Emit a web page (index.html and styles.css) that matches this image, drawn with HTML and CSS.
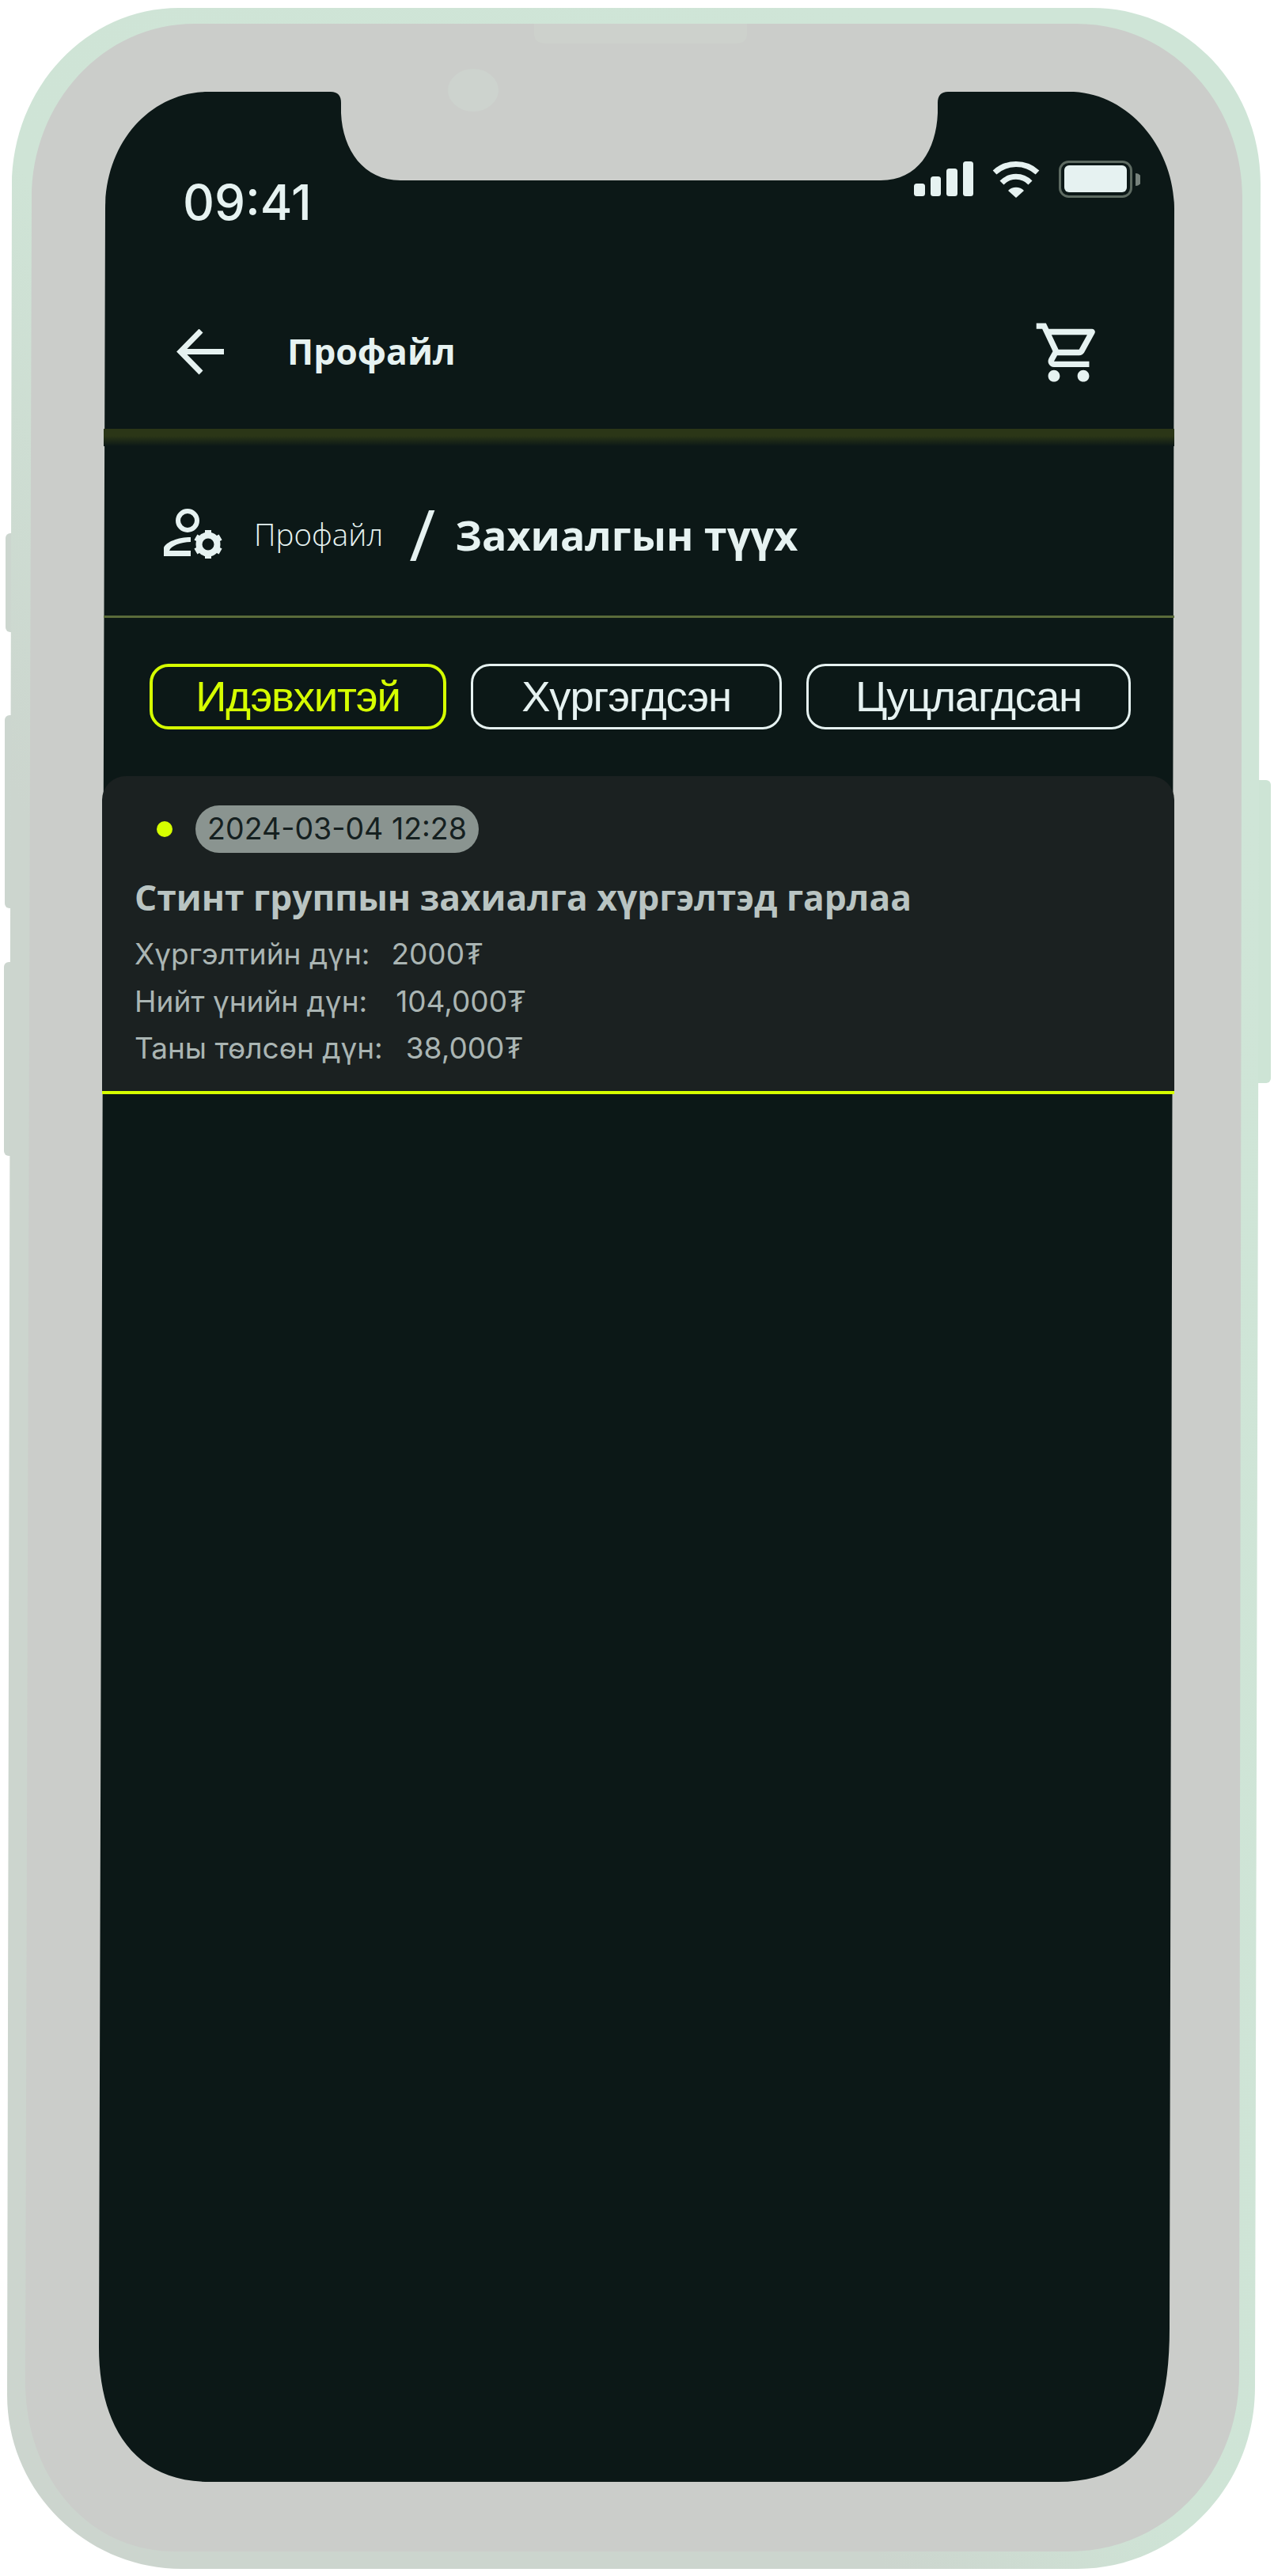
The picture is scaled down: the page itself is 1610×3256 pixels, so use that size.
FILE: index.html
```html
<!DOCTYPE html>
<html lang="mn">
<head>
<meta charset="utf-8">
<title>Захиалгын түүх</title>
<link rel="stylesheet" href="styles.css">
</head>
<body>
<div class="phone">
  <svg class="frame" width="1610" height="3256" viewBox="0 0 1610 3256" aria-hidden="true">
    <defs>
      <linearGradient id="body" x1="0.7" y1="0" x2="0.2" y2="0.5">
        <stop offset="0" stop-color="#cfe5d7"/>
        <stop offset="0.75" stop-color="#cfe4d6"/>
        <stop offset="1" stop-color="#ccd5ce"/>
      </linearGradient>
    </defs>
    <rect x="7" y="674" width="30" height="125" rx="6" fill="#ccd6cf"/>
    <rect x="6" y="904" width="30" height="244" rx="6" fill="#ccd6cf"/>
    <rect x="5" y="1216" width="30" height="245" rx="6" fill="#ccd6cf"/>
    <rect x="1570" y="986" width="36" height="383" rx="6" fill="#cde4d5"/>
    <path d="M226 10L1380 10C1500 10 1593 110 1593 232L1586 3017C1586 3150 1480 3247 1362 3247L230 3247C110 3247 9 3150 9 3027L15 235C15 110 110 10 226 10Z" fill="url(#body)"/>
    <path d="M246 30L1360 30C1480 30 1570 130 1570 250L1566 3000C1566 3130 1470 3225 1350 3225L222 3225C110 3225 32 3130 32 3010L40 250C40 130 130 30 246 30Z" fill="#cbcdca"/>
    <path d="M675 30L944 30L944 42Q944 55 930 55L690 55Q675 55 675 42Z" fill="#cdd1cc"/>
    <ellipse cx="598" cy="114" rx="32" ry="27" fill="#cdd3ce"/>
    <path d="M264 116L418 116Q431 116 431 130L431 143C433 190 460 228 506 228L1113 228C1160 228 1183 190 1185 143L1185 130Q1185 116 1198 116L1357 116C1430 120 1484 190 1484 264L1478 2943C1478 3070 1440 3137 1337 3137L265 3137C165 3137 125 3060 125 2967L133 264C133 180 190 116 264 116Z" fill="#0c1817"/>
  </svg>

  <main class="screen">
    <div class="status">
      <span class="time">09:41</span>
      <svg class="status-icons" width="286" height="48" viewBox="1155 203 286 48" aria-hidden="true">
        <rect x="1155" y="232" width="14" height="16" rx="3.5" class="ink"/>
        <rect x="1176" y="223" width="13" height="25" rx="3.5" class="ink"/>
        <rect x="1196" y="213" width="14" height="35" rx="3.5" class="ink"/>
        <rect x="1217" y="204" width="13" height="44" rx="3.5" class="ink"/>
        <path d="M1257 218A40 40 0 0 1 1311 218" class="wifi"/>
        <path d="M1266 231A25 25 0 0 1 1302 231" class="wifi"/>
        <path d="M1274 241A14 14 0 0 1 1294 241L1284 250Z" class="ink"/>
        <rect x="1339.5" y="204.5" width="90" height="44" rx="11" class="bat"/>
        <rect x="1345" y="209" width="79" height="34" rx="6" class="ink"/>
        <path d="M1435 219A8 8 0 0 1 1435 235Z" fill="#77827c"/>
      </svg>
    </div>

    <header class="nav">
      <svg class="back" width="60" height="58" viewBox="223 416 60 58" aria-hidden="true">
        <path d="M283 444.500L229 444.500M254 418L228 444.500L254 471" class="arrow"/>
      </svg>
      <h1 class="nav-title">Профайл</h1>
      <svg class="cart" width="89" height="89" viewBox="0 0 24 24" aria-hidden="true">
        <path class="ink" d="M15.550 13c.75 0 1.410-.41 1.750-1.030l3.580-6.490A.996.996 0 0 0 20.010 4H5.210l-.94-2H1v2h2l3.600 7.590-1.350 2.440C4.520 15.370 5.480 17 7 17h12v-2H7l1.100-2h7.450zM6.160 6h12.150l-2.760 5H8.530L6.160 6zM7 18c-1.100 0-1.990.9-1.990 2S5.900 22 7 22s2-.9 2-2-.9-2-2-2zm10 0c-1.100 0-1.990.9-1.990 2s.89 2 1.990 2 2-.9 2-2-.9-2-2-2z"/>
      </svg>
    </header>
    <div class="band"></div>

    <nav class="crumbs">
      <svg class="crumb-icon" width="75" height="64" viewBox="207 643 75 64" aria-hidden="true">
        <circle cx="237" cy="658" r="12" class="line"/>
        <path class="ink" d="M207 703L207 692C210 685 225 679 241 679L241 685C228 685 216 690 214 696L241 696L241 703Z"/>
        <circle cx="263" cy="688" r="11.500" class="gear"/>
        <path class="gear" d="M263 670V677M263 699V706M247.400 679L253.500 682.500M272.500 693.500L278.600 697M247.400 697L253.500 693.500M272.500 682.500L278.600 679"/>
      </svg>
      <span class="crumb-parent">Профайл</span>
      <span class="crumb-slash">/</span>
      <span class="crumb-current">Захиалгын түүх</span>
    </nav>
    <div class="divider"></div>

    <div class="tabs">
      <button class="tab tab-active tab-a">Идэвхитэй</button>
      <button class="tab tab-b">Хүргэгдсэн</button>
      <button class="tab tab-c">Цуцлагдсан</button>
    </div>

    <article class="card">
      <div class="card-head">
        <span class="dot"></span>
        <span class="date">2024-03-04 12:28</span>
      </div>
      <h2 class="card-title">Стинт группын захиалга хүргэлтэд гарлаа</h2>
      <p class="row"><span>Хүргэлтийн дүн:</span><span class="val val-1">2000₮</span></p>
      <p class="row"><span>Нийт үнийн дүн:</span><span class="val val-2">104,000₮</span></p>
      <p class="row"><span>Таны төлсөн дүн:</span><span class="val val-3">38,000₮</span></p>
    </article>
  </main>
</div>
</body>
</html>
```

FILE: styles.css
```css
* { box-sizing: border-box; }
html, body { margin: 0; padding: 0; background: #fff; }

.phone {
  position: relative;
  width: 1610px;
  height: 3256px;
  overflow: hidden;
  padding-left: 131px;
}
.frame { position: absolute; left: 0; top: 0; }

.screen {
  position: relative;
  width: 1353px;
  padding-top: 200px;
  color: #e6f2f1;
  font-family: "Open Sans", sans-serif;
}
.ink { fill: #e6f2f1; }
.line { fill: none; stroke: #e6f2f1; stroke-width: 6; }
.gear { fill: none; stroke: #e6f2f1; stroke-width: 8; }
.wifi { fill: none; stroke: #e6f2f1; stroke-width: 7; }
.arrow { fill: none; stroke: #e6f2f1; stroke-width: 7; }
.bat { fill: none; stroke: #5e6b62; stroke-width: 3; }

.status {
  height: 90px;
  display: flex;
  justify-content: space-between;
  align-items: flex-start;
  padding: 0 43px 0 100px;
}
.time {
  font-family: Inter, sans-serif;
  font-size: 62px;
  font-weight: 500;
  line-height: 90px;
  margin-top: 11px;
}
.status-icons { margin-top: 3px; }

.nav {
  margin-top: 110px;
  height: 90px;
  display: flex;
  align-items: center;
  padding-left: 92px;
}
.nav-title {
  margin: 0 0 3px 80px;
  font-size: 44.500px;
  font-weight: 700;
  line-height: 60px;
  flex: 1;
}
.cart { margin-right: 89px; }

.band {
  margin-top: 52px;
  height: 22px;
  background: linear-gradient(#2b3617 0, #2b3617 9px, #0c1817 100%);
}

.crumbs {
  margin-top: 66px;
  height: 90px;
  display: flex;
  align-items: center;
  padding-left: 76px;
}
.crumb-parent {
  margin-left: 39px;
  font-size: 38.500px;
  font-weight: 300;
}
.crumb-slash {
  margin: 0 0 3px 33px;
  font-size: 90px;
  font-weight: 500;
  line-height: 90px;
}
.crumb-current {
  margin-left: 25px;
  font-size: 52px;
  font-weight: 700;
}

.divider { margin-top: 58px; height: 3px; background: #5a6b3a; }

.tabs {
  margin-top: 58px;
  display: flex;
  gap: 31px;
  padding-left: 58px;
}
.tab {
  height: 83px;
  border: 3px solid #e6f2f1;
  border-radius: 24px;
  background: none;
  padding: 0;
  color: #e6f2f1;
  font-family: "Liberation Sans", sans-serif;
  font-size: 54.500px;
  letter-spacing: -1.200px;
}
.tab-a { width: 375px; }
.tab-b { width: 393px; }
.tab-c { width: 410px; }
.tab-active { border: 4px solid #d6ff00; color: #d6ff00; }

.card {
  margin: 59px 0 0 -2px;
  height: 402px;
  padding: 37px 0 0 41px;
  background: #1b2121;
  border-radius: 30px 30px 0 0;
  border-bottom: 4px solid #d6ff00;
}
.card-head { display: flex; align-items: center; gap: 29px; padding-left: 28px; }
.dot { width: 20px; height: 20px; border-radius: 50%; background: #d6ff00; }
.date {
  width: 358px;
  height: 60px;
  border-radius: 30px;
  background: #8a9490;
  color: #152020;
  font-family: Inter, sans-serif;
  font-size: 37.500px;
  line-height: 60px;
  text-align: center;
}
.card-title {
  margin: 24px 0 0;
  font-size: 44.300px;
  font-weight: 700;
  line-height: 64px;
  color: #b9c4c2;
}
.row {
  margin: 0;
  font-family: Inter, sans-serif;
  font-size: 37px;
  line-height: 59.500px;
  color: #aab5b3;
}
.card-title + .row { margin-top: 10px; }
.val-1 { margin-left: 27px; }
.val-2 { margin-left: 36px; }
.val-3 { margin-left: 29px; }
```
